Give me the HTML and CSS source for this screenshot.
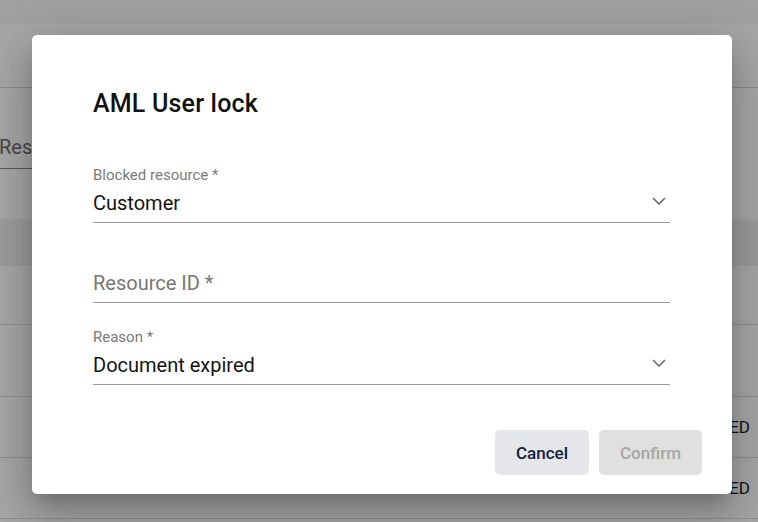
FILE: index.html
```html
<!DOCTYPE html>
<html lang="en">
<head>
    <meta charset="UTF-8">
    <meta name="viewport" content="width=device-width, initial-scale=1.0">
    <title>AML User lock</title>
    <link rel="stylesheet" href="styles.css">
</head>
<body>
    <div class="page">
        <div class="topbar"></div>
        <div class="toolbar"></div>
        <div class="filters">
            <div class="filter-input">Resource ID</div>
        </div>
        <div class="table-head"></div>
        <div class="table-row row-a"></div>
        <div class="table-row row-b"></div>
        <div class="table-row row-c"><span class="status">BLOCKED</span></div>
        <div class="table-row row-c"><span class="status">BLOCKED</span></div>
    </div>

    <div class="overlay">
        <div class="dialog">
            <h1 class="dialog-title">AML User lock</h1>

            <div class="field">
                <label class="field-label">Blocked resource *</label>
                <div class="field-value">
                    <span>Customer</span>
                    <svg class="chevron" width="14" height="8" viewBox="0 0 14 8">
                        <path d="M1 1l6 6 6-6" fill="none" stroke="#6b6b6b" stroke-width="1.6"/>
                    </svg>
                </div>
            </div>

            <div class="field field-id">
                <label class="field-label"></label>
                <div class="field-value placeholder">Resource ID *</div>
            </div>

            <div class="field field-reason">
                <label class="field-label">Reason *</label>
                <div class="field-value">
                    <span>Document expired</span>
                    <svg class="chevron" width="14" height="8" viewBox="0 0 14 8">
                        <path d="M1 1l6 6 6-6" fill="none" stroke="#6b6b6b" stroke-width="1.6"/>
                    </svg>
                </div>
            </div>

            <div class="dialog-actions">
                <button class="btn cancel">Cancel</button>
                <button class="btn confirm" disabled>Confirm</button>
            </div>
        </div>
    </div>
</body>
</html>
```

FILE: styles.css
```css
* {
    margin: 0;
    padding: 0;
    box-sizing: border-box;
}

body {
    font-family: Roboto, 'Liberation Sans', Arial, sans-serif;
    background: #fff;
    color: #1a1a1a;
    width: 758px;
    height: 522px;
    overflow: hidden;
    position: relative;
}

/* page behind the dialog */
.page {
    display: flex;
    flex-direction: column;
}

.topbar {
    height: 24px;
    background: #f6f6f6;
}

.toolbar {
    height: 64px;
    border-bottom: 1px solid #d6d6d6;
}

.filters {
    height: 131px;
    padding-top: 47px;
}

.filter-input {
    width: 200px;
    margin-left: -1px;
    font-size: 20px;
    line-height: 24px;
    color: #6e6e6e;
    padding-bottom: 9px;
    border-bottom: 1px solid #888;
}

.table-head {
    height: 47px;
    background: #f0f0f0;
}

.table-row {
    display: flex;
    align-items: center;
    justify-content: flex-end;
    padding-right: 8px;
    border-bottom: 1px solid #dcdcdc;
}

.row-a { height: 59px; }
.row-b { height: 72px; }
.row-c { height: 61px; }

.status {
    font-size: 17px;
    color: #1a1a1a;
}

/* dialog */
.overlay {
    position: absolute;
    inset: 0;
    background: rgba(0, 0, 0, 0.35);
    padding: 35px 0 0 32px;
}

.dialog {
    width: 700px;
    background: #fff;
    border-radius: 5px;
    padding: 53px 62px 19px 61px;
    box-shadow: 0 11px 15px -7px rgba(0, 0, 0, 0.2),
                0 24px 38px 3px rgba(0, 0, 0, 0.14),
                0 9px 46px 8px rgba(0, 0, 0, 0.12);
}

.dialog-title {
    font-size: 25px;
    line-height: 32px;
    font-weight: 500;
    letter-spacing: 0.2px;
    color: #111;
    margin-bottom: 47px;
}

.field {
    border-bottom: 1px solid #9a9a9a;
    padding-bottom: 7px;
}

.field-id {
    margin-top: 24px;
}

.field-reason {
    margin-top: 26px;
}

.field-label {
    display: block;
    height: 16px;
    font-size: 15px;
    line-height: 16px;
    color: #7a7a7a;
    margin-bottom: 8px;
}

.field-value {
    display: flex;
    align-items: center;
    justify-content: space-between;
    font-size: 20px;
    line-height: 24px;
    color: #141414;
}

.field-value.placeholder {
    color: #777;
}

.chevron {
    margin-right: 4px;
    margin-bottom: 5px;
}

.dialog-actions {
    display: flex;
    justify-content: flex-end;
    gap: 10px;
    margin-top: 45px;
    margin-right: -32px;
}

.btn {
    height: 45px;
    padding: 0 20px;
    border: none;
    border-radius: 5px;
    font-family: inherit;
    font-size: 17px;
    font-weight: 500;
    cursor: pointer;
}

.btn.cancel {
    width: 94px;
    background: #e4e6ea;
    color: #14203a;
}

.btn.confirm {
    width: 103px;
    background: #e0e0e0;
    color: #a6a6a6;
    cursor: default;
}
```
